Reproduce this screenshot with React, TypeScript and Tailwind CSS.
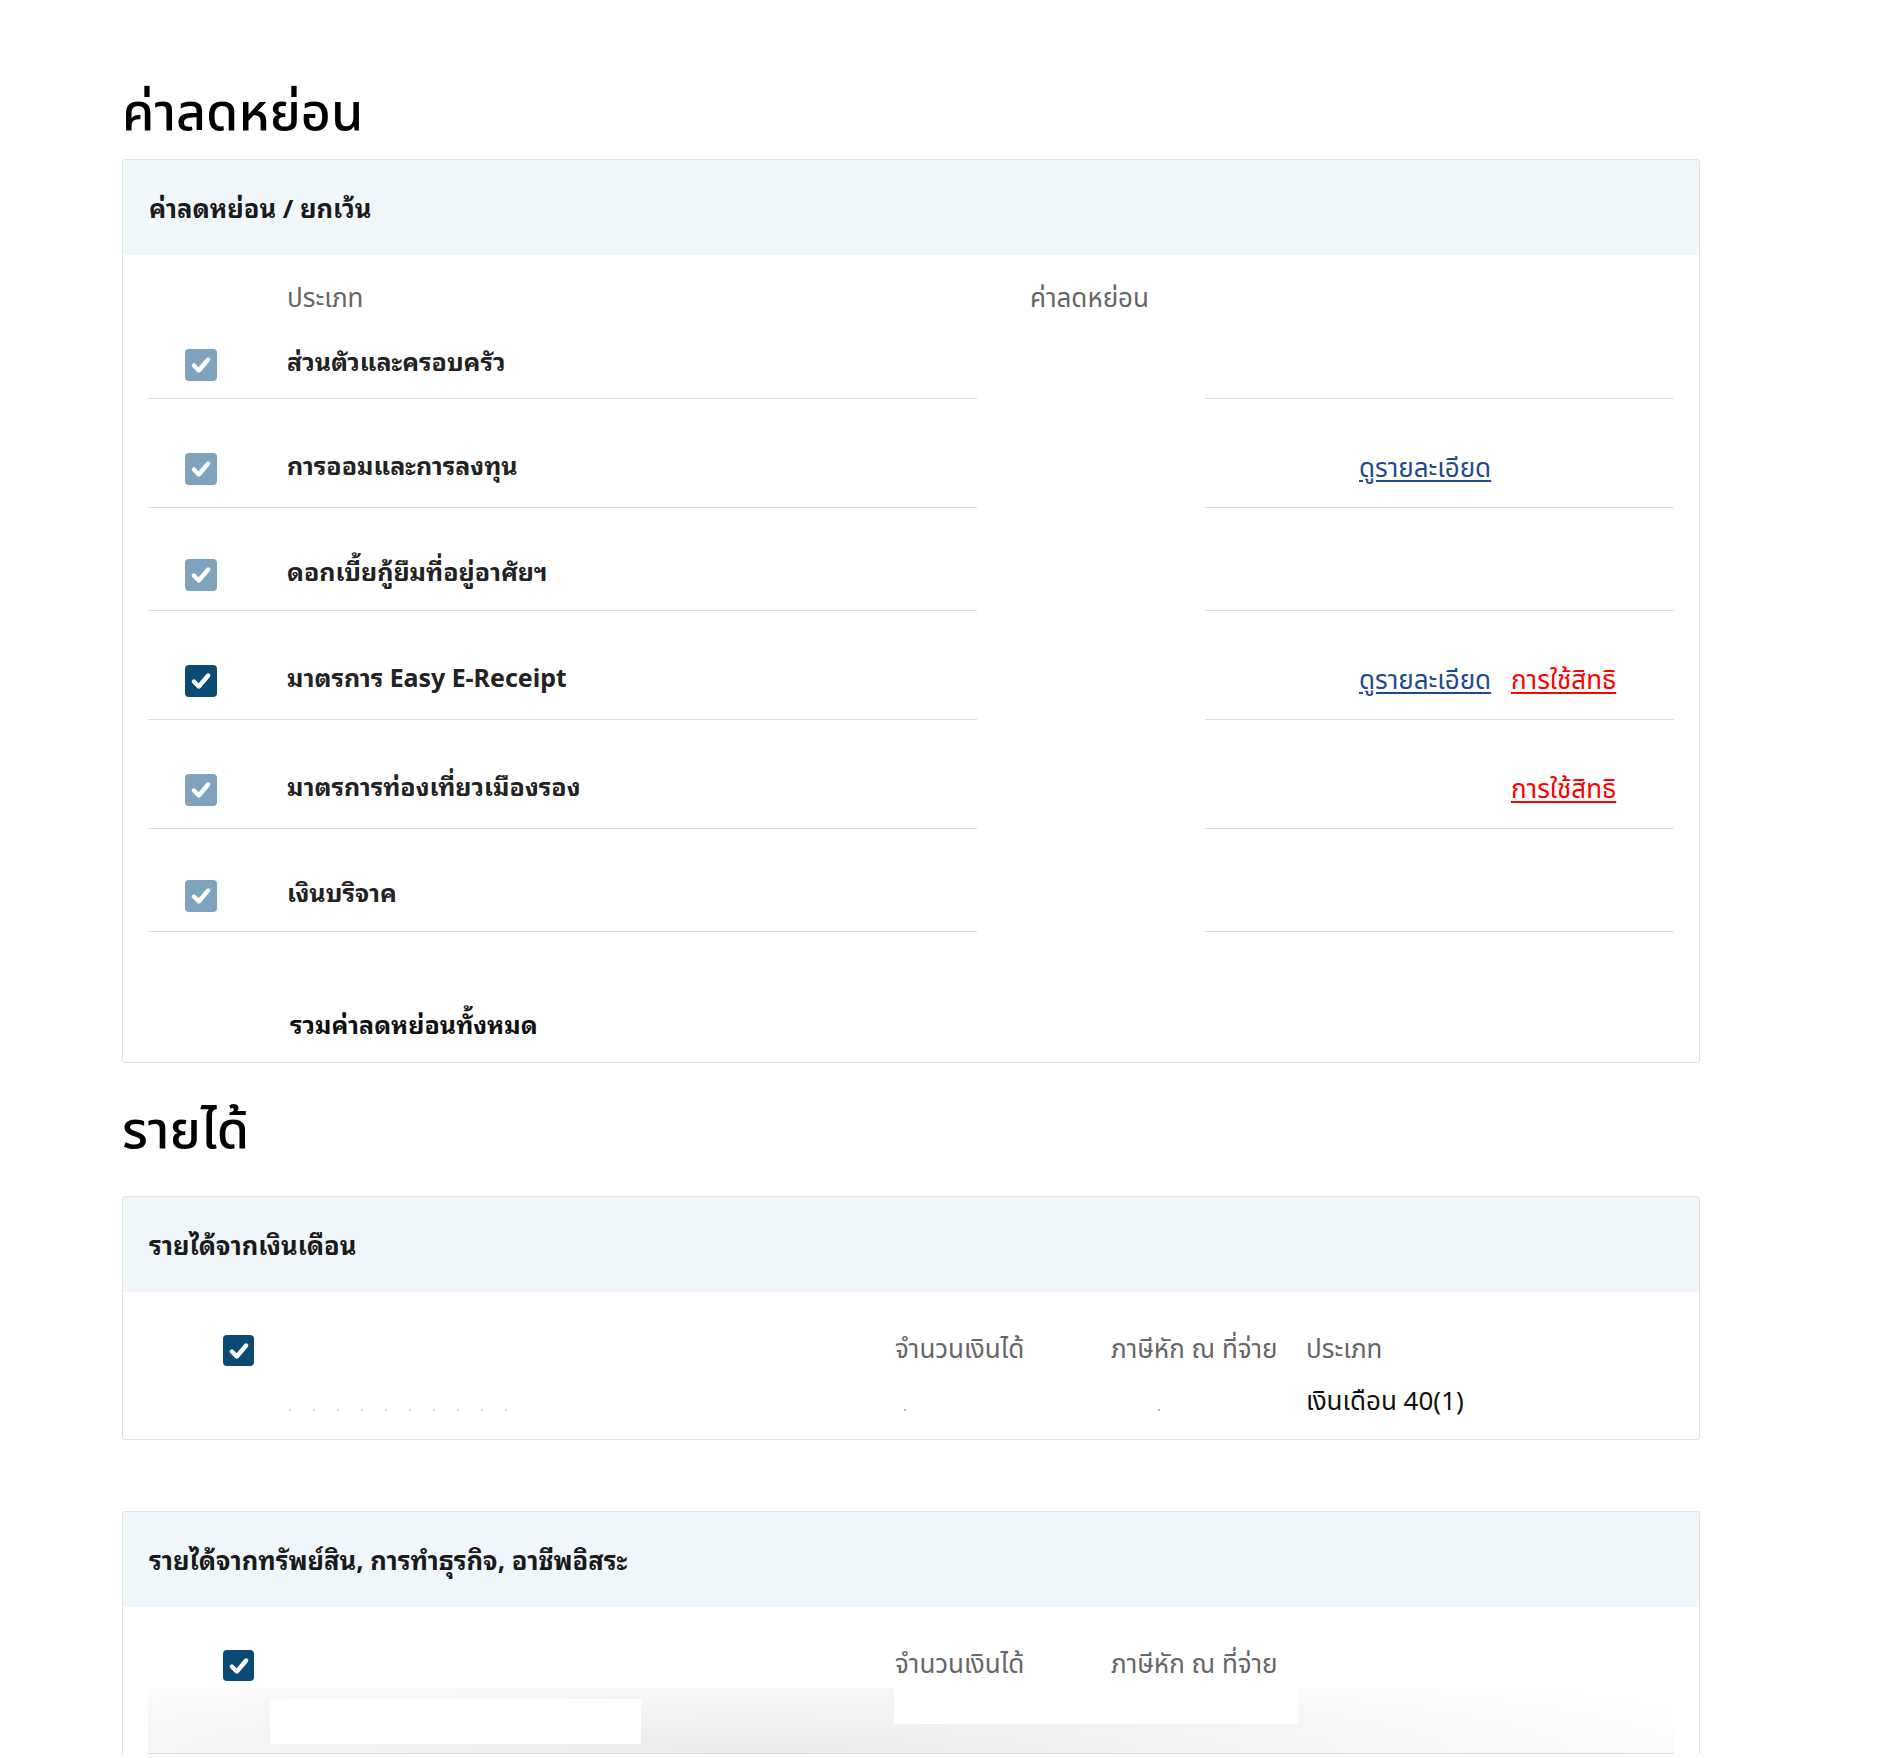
import React from "react";

const FONT = { fontFamily: '"Noto Sans Thai", "Noto Sans", sans-serif' };
const LOOPED = { fontFamily: '"Noto Sans Thai Looped", Tahoma, Loma, Garuda, Waree, "Noto Sans Thai", sans-serif' };

function Check({ active, small }: { active?: boolean; small?: boolean }) {
  return (
    <div
      className={`flex items-center justify-center rounded-[4px] ${small ? "w-[31px] h-[31px]" : "w-[32px] h-[32px]"} ${active ? "bg-[#0b4a72]" : "bg-[#7fa3bc]"}`}
    >
      <svg width="22" height="22" viewBox="0 0 20 20">
        <path d="M3.5 10.5 L8 15 L16.5 5" stroke="#ffffff" strokeWidth="4" fill="none" strokeLinecap="round" strokeLinejoin="round" />
      </svg>
    </div>
  );
}

type Row = { label: string; active?: boolean; detail?: boolean; use?: boolean };

const rows: Row[] = [
  { label: "ส่วนตัวและครอบครัว" },
  { label: "การออมและการลงทุน", detail: true },
  { label: "ดอกเบี้ยกู้ยืมที่อยู่อาศัยฯ" },
  { label: "มาตรการ Easy E-Receipt", active: true, detail: true, use: true },
  { label: "มาตรการท่องเที่ยวเมืองรอง", use: true },
  { label: "เงินบริจาค" },
];

function CardHeader({ title }: { title: string }) {
  return (
    <div className="h-[95px] bg-[#eff7fa] px-[26px] flex items-center">
      <span className="text-[25.5px] font-bold text-[#1a1a1a]" style={LOOPED}>{title}</span>
    </div>
  );
}

export default function App() {
  return (
    <div className="min-h-[1758px] h-[1758px] overflow-hidden bg-white text-[#222]" style={FONT}>
      <div className="pl-[122px] pt-[76px]">
        <h1 className="text-[52px] leading-[76px] font-medium text-black">ค่าลดหย่อน</h1>
        <div className="mt-[7px] w-[1578px] border border-[#e2e2e2] rounded-[3px] overflow-hidden">
          <CardHeader title="ค่าลดหย่อน / ยกเว้น" />
          <div className="px-[25px]">
            <div className="mt-[29px] h-[30px] grid grid-cols-[829px_228px_469px] text-[26px] leading-[30px] text-[#666]">
              <div className="pl-[139px]">ประเภท</div>
              <div className="pl-[53px]">ค่าลดหย่อน</div>
              <div />
            </div>
            {rows.map((r, i) => {
              const pad = i === 0 ? "pt-[35px] pb-[17px]" : r.detail || r.use ? "pt-[54px] pb-[22px]" : "pt-[51px] pb-[19px]";
              return (
                <div key={i} className="grid grid-cols-[829px_228px_469px]">
                  <div className={`border-b border-[#dedede] flex items-center ${pad}`}>
                    <div className="ml-[37px]">
                      <Check active={r.active} />
                    </div>
                    <span className="ml-[70px] -mt-[10px] text-[25px] leading-[32px] font-bold text-[#222]" style={LOOPED}>{r.label}</span>
                  </div>
                  <div />
                  <div className={`border-b border-[#dedede] flex items-center ${pad}`}>
                    <div className="ml-[154px] w-[152px]">
                      {r.detail && (
                        <a className="text-[26px] leading-[32px] text-[#1e4a8c] underline underline-offset-[3px] cursor-pointer">ดูรายละเอียด</a>
                      )}
                    </div>
                    {r.use && (
                      <a className="text-[26px] leading-[32px] text-[#ff0000] underline underline-offset-[3px] cursor-pointer">การใช้สิทธิ</a>
                    )}
                  </div>
                </div>
              );
            })}
            <div className="pt-[76px] pb-[24px] pl-[142px] text-[25px] leading-[30px] font-bold text-[#111]" style={LOOPED}>รวมค่าลดหย่อนทั้งหมด</div>
          </div>
        </div>

        <h1 className="mt-[31px] text-[52px] leading-[76px] font-medium text-black">รายได้</h1>
        <div className="mt-[26px] w-[1578px] border border-[#e2e2e2] rounded-[3px] overflow-hidden">
          <CardHeader title="รายได้จากเงินเดือน" />
          <div className="px-[25px] pt-[43px] pb-[26px]">
            <div className="flex items-start">
              <div className="ml-[75px] w-[31px]">
                <Check active small />
              </div>
              <div className="ml-[641px] w-[216px] text-[26px] leading-[30px] text-[#666]">จำนวนเงินได้</div>
              <div className="w-[195px] text-[26px] leading-[30px] text-[#666]">ภาษีหัก ณ ที่จ่าย</div>
              <div className="flex flex-col">
                <span className="text-[26px] leading-[30px] text-[#666]">ประเภท</span>
                <span className="mt-[22px] text-[26px] leading-[30px] text-[#111]">เงินเดือน 40(1)</span>
              </div>
            </div>
            <div className="-mt-[10px] flex items-center h-[6px]">
              <div className="ml-[141px] flex gap-[22px]">
                {Array.from({ length: 10 }).map((_, k) => (
                  <span key={k} className="w-[2px] h-[2px] rounded-full bg-[#d0d0d0]" />
                ))}
              </div>
              <span className="ml-[397px] w-[2px] h-[2px] bg-[#bbb]" />
              <span className="ml-[252px] w-[2px] h-[2px] bg-[#bbb]" />
            </div>
          </div>
        </div>

        <div className="mt-[71px] w-[1578px] border border-b-0 border-[#e2e2e2] rounded-t-[3px] overflow-hidden">
          <CardHeader title="รายได้จากทรัพย์สิน, การทำธุรกิจ, อาชีพอิสระ" />
          <div className="px-[25px] pt-[43px]">
            <div className="flex items-start">
              <div className="ml-[75px] w-[31px]">
                <Check active small />
              </div>
              <div className="ml-[641px] w-[216px] text-[26px] leading-[30px] text-[#666]">จำนวนเงินได้</div>
              <div className="w-[195px] text-[26px] leading-[30px] text-[#666]">ภาษีหัก ณ ที่จ่าย</div>
            </div>
            <div className="mt-[7px] h-[66px] border-b border-[#dcdcdc] bg-[radial-gradient(ellipse_70%_160%_at_40%_100%,#e9e9e9_0%,#f5f5f5_50%,#ffffff_100%)] flex items-start">
              <div className="ml-[122px] mt-[11px] w-[371px] h-[45px] bg-white" />
              <div className="ml-[253px] w-[404px] h-[36px] bg-white" />
            </div>
          </div>
        </div>
      </div>
    </div>
  );
}
